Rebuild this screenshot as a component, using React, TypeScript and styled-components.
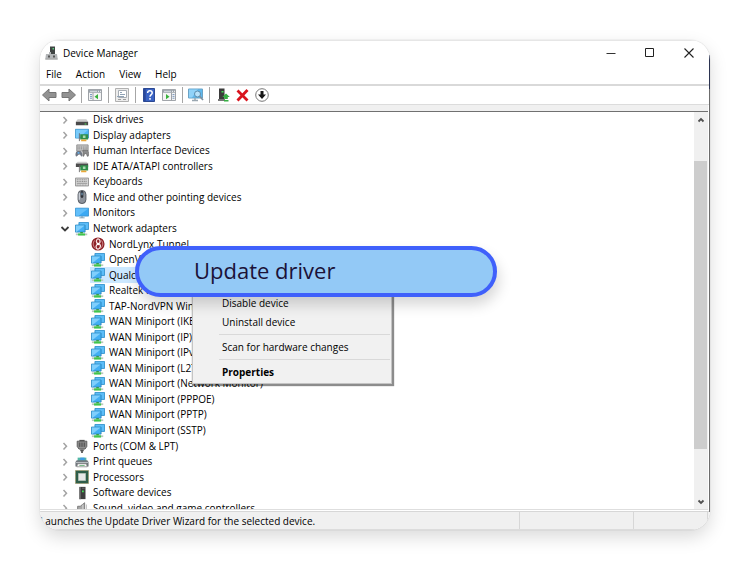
import React from "react";
import styled, { createGlobalStyle } from "styled-components";

const GlobalStyle = createGlobalStyle`
  * { box-sizing: border-box; }
  body { margin: 0; background: #fff; }
  body, button { font-family: "Open Sans", "Noto Sans", sans-serif; font-size: 10px; color: #000; }
  button { border: 0; padding: 0; background: transparent; }
  svg { display: block; flex: none; }
`;

const Page = styled.main`
  padding: 40px;
`;

const Window = styled.section`
  position: relative;
  display: flex;
  flex-direction: column;
  overflow: hidden;
  border-radius: 20px;
  background: #fff;
  &::after {
    content: "";
    position: absolute;
    top: 15px;
    bottom: 18px;
    right: 0;
    width: 1px;
    background: linear-gradient(#2b3350 34px, #6c6c6c 34px);
  }
`;

const Shadow = styled.div`
  border-radius: 20px;
  box-shadow: 0 0 1px rgba(0, 0, 0, 0.35), 0 7px 18px rgba(0, 0, 0, 0.15);
`;

const TitleBar = styled.header`
  display: flex;
  align-items: center;
  height: 24px;
  padding: 0 2px 0 5px;
  border-top: 1px solid #e6e6e6;
`;

const Title = styled.h1`
  flex: 1;
  margin: 0 0 0 5px;
  font-size: 10px;
  font-weight: 400;
`;

const CaptionButton = styled.button`
  display: grid;
  place-items: center;
  width: 39px;
  height: 20px;
`;

const MenuBar = styled.nav`
  display: flex;
  gap: 14px;
  height: 20px;
  padding-left: 6px;
  align-items: center;
`;

const ToolBar = styled.div`
  display: flex;
  align-items: center;
  height: 21px;
  border-top: 2px solid #d9d9d9;
  border-bottom: 1px solid #dcdcdc;
`;

const ToolButton = styled.button<{ $narrow?: boolean }>`
  display: grid;
  place-items: center;
  width: ${(p) => (p.$narrow ? 19 : 20)}px;
  height: 18px;
`;

const ToolDivider = styled.span`
  width: 1px;
  height: 16px;
  margin: 0 3px;
  background: #a6a6a6;
`;

const Content = styled.div`
  position: relative;
  display: flex;
  margin-right: 2px;
  height: 405px;
  border-top: 6px solid #f0f0f0;
  border-bottom: 1px solid #dedede;
`;

const TreePane = styled.div`
  flex: 1;
  overflow: hidden;
  border-top: 1px solid #707070;
`;

const Tree = styled.ul`
  display: grid;
  grid-auto-rows: 1fr;
  height: 404px;
  margin: 0;
  padding: 0;
  list-style: none;
`;

const TreeRow = styled.li<{ $child?: boolean }>`
  display: flex;
  align-items: center;
  min-height: 0;
  padding-left: ${(p) => (p.$child ? 50 : 20)}px;
  line-height: 15px;
  white-space: nowrap;
`;

const Expander = styled.button`
  display: grid;
  place-items: center;
  width: 10px;
  height: 12px;
  margin-right: 4px;
`;

const RowLabel = styled.span<{ $selected?: boolean }>`
  display: flex;
  align-items: center;
  gap: 4px;
  height: 100%;
  padding: 0 4px 0 1px;
  background: ${(p) => (p.$selected ? "#cce8ff" : "transparent")};
`;

const ScrollBar = styled.div`
  display: flex;
  flex-direction: column;
  width: 14px;
  padding-right: 1px;
  background: #f0f0f0;
  border-top: 1px solid #707070;
`;

const ScrollButton = styled.button`
  display: grid;
  place-items: center;
  height: 15px;
`;

const ScrollTrack = styled.div`
  flex: 1;
  padding: 34px 0 45px;
`;

const ScrollThumb = styled.div`
  height: 100%;
  background: #cdcdcd;
`;

const ContextMenu = styled.div`
  position: absolute;
  top: 162px;
  left: 152px;
  width: 200px;
  display: flex;
  flex-direction: column;
  padding: 19px 2px 2px;
  background: #f1f1f1;
  border: 1px solid #c4c4c4;
  box-shadow: 1px 1px 1px 1px rgba(0, 0, 0, 0.45);
`;

const MenuItem = styled.button<{ $strong?: boolean }>`
  height: 19px;
  padding-left: 27px;
  text-align: left;
  font-weight: ${(p) => (p.$strong ? 700 : 400)};
`;

const MenuDivider = styled.hr`
  width: 171px;
  height: 1px;
  margin: 3px 0 2px 24px;
  border: 0;
  background: #d9d9d9;
`;

const Highlight = styled.button`
  position: absolute;
  top: 135px;
  left: 95px;
  width: 362px;
  height: 51px;
  padding: 0 0 4px 55px;
  text-align: left;
  font-size: 22px;
  color: #1b1238;
  background: #93c9f6;
  border: 4px solid #3f60fb;
  border-radius: 26px;
  box-shadow: 2px 8px 14px rgba(0, 0, 0, 0.16);
`;

const StatusBar = styled.footer`
  display: flex;
  height: 19px;
  margin-top: 1px;
  padding-right: 2px;
  background: #f0f0f0;
  border-top: 1px solid #d7d7d7;
  border-bottom: 1px solid #dcdcdc;
`;

const StatusCell = styled.span<{ $width?: number }>`
  flex: ${(p) => (p.$width ? `0 0 ${p.$width}px` : "1")};
  line-height: 19px;
  white-space: nowrap;
  border-right: 1px solid #d7d7d7;
`;

type IconName =
  | "disk" | "display" | "hid" | "ide" | "keyboard" | "mouse" | "monitor" | "network"
  | "nord" | "port" | "printer" | "cpu" | "software" | "sound";

const drawings: Record<IconName, React.ReactNode> = {
  disk: (
    <>
      <path d="M3 7h10l2 3H1z" fill="#c9c9c9" />
      <path d="M1 10h14v4H1z" fill="#4a4a4a" />
      <path d="M11 12h2v1h-2z" fill="#4fe05a" />
    </>
  ),
  display: (
    <>
      <path d="M.5 1.500h15v10H.5z" fill="#4db5f5" stroke="#3f93c8" />
      <path d="M1 2h14L5 11H1z" fill="#79cbfb" />
      <path d="M6 7h9v6H6z" fill="#2f8f4a" />
      <path d="M9 8.500h3v3H9z" fill="#a9d8b0" />
      <path d="M7 13h6v2H7z" fill="#e9a83a" />
      <path d="M5 6v9" stroke="#666" />
    </>
  ),
  hid: (
    <>
      <path d="M2 1h13v7H2z" fill="#c3c3c3" stroke="#8d8d8d" />
      <path d="M3 3.500h11M3 5.500h11" stroke="#777" strokeDasharray="1 1" />
      <path d="M1 14c-1-2 0-6 2-6h3c2 0 3 5 2 6-2 1-1-2-3-2s-2 3-4 2z" fill="#707783" />
      <path d="M9 7h5c2 1 2 6 1 7h-1l-1-3h-2l-1 3H9z" fill="#8b8b8b" stroke="#585858" strokeWidth=".6" />
      <path d="M3 9h2v2H3z" fill="#5faae6" />
    </>
  ),
  ide: (
    <>
      <path d="M3 3h10l2 2H1z" fill="#cfcfcf" />
      <path d="M1 5h14v4H1z" fill="#4c4c4c" />
      <path d="M6 7h9v6H6z" fill="#2f8f4a" />
      <path d="M9 8.500h3v3H9z" fill="#a9d8b0" />
      <path d="M7 13h6v2H7z" fill="#e9a83a" />
      <path d="M5 7v8" stroke="#666" />
    </>
  ),
  keyboard: (
    <>
      <path d="M.5 3.500h15v9H.5z" fill="#d8d8d8" stroke="#8c8c8c" />
      <path d="M2 5.500h12M2 7.500h12" stroke="#808080" strokeDasharray="1.300 .7" />
      <path d="M2 9.500h12" stroke="#909090" />
      <path d="M2 11.500h12" stroke="#9a9a9a" strokeDasharray="2 1" />
    </>
  ),
  mouse: (
    <>
      <rect x="3.500" y=".5" width="9" height="15" rx="4.500" fill="#8d929a" stroke="#4d5259" />
      <path d="M5 3v8" stroke="#c9ced6" strokeWidth="1.500" />
      <rect x="6.500" y="1" width="3" height="8" rx="1.500" fill="#2e3238" />
      <path d="M8 3v3" stroke="#8fc3ee" />
    </>
  ),
  monitor: (
    <>
      <path d="M.5 2.500h15v9H.5z" fill="#3ba9f3" stroke="#3a93cf" />
      <path d="M1 3h14L4 11H1z" fill="#62bffa" />
      <path d="M5 13.500h6" stroke="#7296ad" />
      <path d="M8 12v1" stroke="#7296ad" strokeWidth="2" />
    </>
  ),
  network: (
    <>
      <path d="M4.500 .5h11v8h-11z" fill="#5cbdf8" stroke="#2f8fca" />
      <path d="M.5 3.500h11v8H.5z" fill="#42aff4" stroke="#2a86be" />
      <path d="M1 4h10l-9 7H1z" fill="#7fcffd" />
      <path d="M6 11.500h3v2H6z" fill="#2f9d3f" />
      <path d="M1 14h13" stroke="#b9c8bd" strokeWidth="2" />
      <path d="M3.500 13h8v2.500h-8z" fill="#3fc64b" />
    </>
  ),
  nord: (
    <>
      <circle cx="8" cy="8" r="7.500" fill="#8e2227" />
      <path d="M8 2c3 1 3 4 1 6 3 1 2 5-1 6-3-1-3-5 0-6-3-2-2-5 0-6z" fill="none" stroke="#f4dede" strokeWidth="1.500" />
      <path d="M4 4c-2 3-2 6 1 9M12 4c2 3 2 6-1 9" fill="none" stroke="#d9a2a4" />
      <circle cx="8" cy="8" r="1.500" fill="#fff" />
    </>
  ),
  port: (
    <>
      <path d="M5 1h6v2H5z" fill="#555" />
      <path d="M2.500 2.500h11v6l-2 3h-7l-2-3z" fill="#8f8f8f" stroke="#555" />
      <path d="M5 4v5M7 4v5M9 4v5M11 4v5" stroke="#4c4c4c" />
      <path d="M6 12h4v2H9v2H7v-2H6z" fill="#555" />
    </>
  ),
  printer: (
    <>
      <path d="M3 3h10v4H3z" fill="#52b7a7" />
      <path d="M6 3h5v3H6z" fill="#3e9be5" />
      <path d="M2 6h12l1.500 2v5H.5V8z" fill="#70767c" />
      <path d="M1 8.500h14" stroke="#c7cbd0" />
      <path d="M3 10h10l1 3.500H2z" fill="#f7f7f7" stroke="#777" strokeWidth=".7" />
      <path d="M5 12h6" stroke="#69b279" />
    </>
  ),
  cpu: (
    <>
      <path d="M.5 .5h15v15H.5z" fill="#2f5e4a" stroke="#b49a5f" strokeDasharray="1 1" />
      <path d="M4 4h8v8H4z" fill="#e8e8e8" stroke="#b4c0b7" />
    </>
  ),
  software: (
    <>
      <path d="M5 1h7v14H5z" fill="#3d3d3d" />
      <path d="M5 1h1.500v14H5z" fill="#777" />
      <path d="M8 5h2v2H8z" fill="#44df58" />
      <path d="M8 2.500h3" stroke="#777" />
    </>
  ),
  sound: (
    <>
      <path d="M3 6h3l5-4v13l-5-4H3z" fill="#a7a7a7" stroke="#757575" />
      <path d="M9 4v9" stroke="#dcdcdc" />
      <path d="M13 4v9" stroke="#b5b5b5" />
    </>
  ),
};

const Icon = ({ name }: { name: IconName }) => (
  <svg width="14" height="14" viewBox="0 0 16 16" aria-hidden="true">
    {drawings[name]}
  </svg>
);

const Chevron = ({ open }: { open?: boolean }) => (
  <svg width="10" height="10" viewBox="0 0 10 10" fill="none" strokeWidth={open ? 1.8 : 1.5} aria-hidden="true">
    <path d={open ? "M1.500 3L5 6.500 8.500 3" : "M3.500 2L6.500 5.200 3.500 8.500"} stroke={open ? "#3c3c3c" : "#a3a3a3"} />
  </svg>
);

const Arrow = ({ up }: { up?: boolean }) => (
  <svg width="8" height="8" viewBox="0 0 8 8" fill="none" stroke="#505050" strokeWidth="1.800" aria-hidden="true">
    <path d={up ? "M1.500 5.500L4 3l2.500 2.500" : "M1.500 2.500L4 5l2.500-2.500"} />
  </svg>
);

const NavArrow = ({ forward }: { forward?: boolean }) => (
  <svg width="15" height="14" viewBox="0 0 15 14" aria-hidden="true">
    <path
      d={forward ? "M14.500 7L8 1V4.500H1V9.500H8V13z" : "M.5 7L7 1V4.500H14V9.500H7V13z"}
      fill="#929292"
      stroke="#757575"
      strokeLinejoin="round"
    />
  </svg>
);

const PaneIcon = ({ right }: { right?: boolean }) => (
  <svg width="14" height="12" viewBox="0 0 14 13" preserveAspectRatio="none" aria-hidden="true">
    <path d="M.5 .5h13v12H.5z" fill="#f4f4f4" stroke="#9a9ea3" />
    <path d="M1 1h12v3H1z" fill="#9ba3ab" />
    <path d="M2 2.500h7" stroke="#dfe4e8" />
    <path d="M10 2.500h3" stroke="#fff" strokeDasharray="1 1" />
    <path d={right ? "M9.500 4v8" : "M5 4v8"} stroke="#9a9ea3" />
    <path d={right ? "M10.500 6h2M10.500 8h2M10.500 10h2" : "M2 6h2M2 8h2M2 10h2"} stroke="#7796bd" />
    <path d={right ? "M4 5.500L7.500 8.300 4 11z" : "M10 5.500L6.500 8.300 10 11z"} fill="#37b13b" />
  </svg>
);

const PropertiesIcon = () => (
  <svg width="14" height="14" viewBox="0 0 14 14" aria-hidden="true">
    <path d="M.5 .5h13v13H.5z" fill="#ececec" stroke="#b0b0b0" />
    <path d="M3.500 2.500h8v7h-8z" fill="#fff" stroke="#a7adb4" />
    <path d="M5 4.500h2M5 6.500h5M2 8.500h7" stroke="#8fa2b5" />
    <path d="M3 11.500h3M8 11.500h3" stroke="#9e9e9e" />
  </svg>
);

const HelpIcon = () => (
  <svg width="12" height="14" viewBox="0 0 13 14" preserveAspectRatio="none" aria-hidden="true">
    <path d="M.5 .5h12v13H.5z" fill="#3a63c4" stroke="#26448f" />
    <path d="M1 1h2v12H1z" fill="#2a489b" />
    <path d="M5 5c0-3 5-3 5 0 0 1.500-2.400 1.700-2.400 3.700M7.600 10v1.700" fill="none" stroke="#fff" strokeWidth="1.600" />
  </svg>
);

const ScanIcon = () => (
  <svg width="16" height="14" viewBox="0 0 16 14" aria-hidden="true">
    <path d="M.5 1h14v9H.5z" fill="#5fb9ee" stroke="#6ba3c6" />
    <path d="M1 1.500h9l-6 8H1z" fill="#90d2f8" />
    <path d="M4 12.500h6M7 10v2" stroke="#9aa7b1" strokeWidth="1.500" />
    <circle cx="9.500" cy="6" r="3" fill="#b8e2fa" stroke="#5a8bac" />
    <path d="M11.500 8L15 12" stroke="#7c909f" strokeWidth="1.600" />
  </svg>
);

const UpdateIcon = () => (
  <svg width="13" height="14" viewBox="0 0 13 14" aria-hidden="true">
    <path d="M2 .5h5.500v11H2z" fill="#3b3b3b" />
    <path d="M1 11h7v2H1z" fill="#777" />
    <path d="M4.500 3h2v1.500h-2z" fill="#46dc58" />
    <path d="M9 5.500L12.800 9H10.800v2H7.300V9H5.300zM7 12h4.500v1.500H7z" fill="#36ae43" />
  </svg>
);

const RemoveIcon = () => (
  <svg width="13" height="13" viewBox="0 0 13 13" aria-hidden="true">
    <path d="M1.500 1.500L11.500 11.500M11.500 1L1.500 11.500" stroke="#d9141e" strokeWidth="2.800" />
  </svg>
);

const DownIcon = () => (
  <svg width="14" height="14" viewBox="0 0 14 14" aria-hidden="true">
    <circle cx="7" cy="7" r="6.300" fill="#fff" stroke="#777" />
    <path d="M5.500 3h3v3.500h2.500L7 11 3 6.500h2.500z" fill="#161616" />
  </svg>
);

const AppIcon = () => (
  <svg width="13" height="14" viewBox="0 0 13 14" aria-hidden="true">
    <path d="M5 .5h5v8H5z" fill="#3f4443" />
    <path d="M7.500 2h1.500v1.500H7.500z" fill="#58cd7a" />
    <path d="M1 8h3V6h2v2h6l.8 5.500H.2z" fill="#b3b6b8" />
    <path d="M3 9.500h2v2H3zM8 9.500h2v2H8z" fill="#555" />
    <path d="M.5 13h12" stroke="#a5a5a5" />
  </svg>
);

type Row = { label: string; icon: IconName; child?: boolean; open?: boolean; selected?: boolean };

const adapter = (label: string, selected = false): Row => ({ label, icon: "network", child: true, selected });

const rows: Row[] = [
  { label: "Disk drives", icon: "disk" },
  { label: "Display adapters", icon: "display" },
  { label: "Human Interface Devices", icon: "hid" },
  { label: "IDE ATA/ATAPI controllers", icon: "ide" },
  { label: "Keyboards", icon: "keyboard" },
  { label: "Mice and other pointing devices", icon: "mouse" },
  { label: "Monitors", icon: "monitor" },
  { label: "Network adapters", icon: "network", open: true },
  { label: "NordLynx Tunnel", icon: "nord", child: true },
  adapter("OpenVPN"),
  adapter("Qualcomm", true),
  adapter("Realtek PCIe"),
  adapter("TAP-NordVPN Wind"),
  adapter("WAN Miniport (IKEv2)"),
  adapter("WAN Miniport (IP)"),
  adapter("WAN Miniport (IPv6)"),
  adapter("WAN Miniport (L2TP)"),
  adapter("WAN Miniport (Network Monitor)"),
  adapter("WAN Miniport (PPPOE)"),
  adapter("WAN Miniport (PPTP)"),
  adapter("WAN Miniport (SSTP)"),
  { label: "Ports (COM & LPT)", icon: "port" },
  { label: "Print queues", icon: "printer" },
  { label: "Processors", icon: "cpu" },
  { label: "Software devices", icon: "software" },
  { label: "Sound, video and game controllers", icon: "sound" },
];

export default function App() {
  return (
    <Page>
      <GlobalStyle />
      <Shadow>
        <Window>
          <TitleBar>
            <AppIcon />
            <Title>Device Manager</Title>
            <CaptionButton aria-label="Minimize">
              <svg width="10" height="10" viewBox="0 0 10 10"><path d="M.5 5.500h9" stroke="#333" /></svg>
            </CaptionButton>
            <CaptionButton aria-label="Maximize">
              <svg width="10" height="10" viewBox="0 0 10 10"><path d="M.5 .5h8v8h-8z" fill="none" stroke="#222" /></svg>
            </CaptionButton>
            <CaptionButton aria-label="Close">
              <svg width="10" height="10" viewBox="0 0 10 10"><path d="M.5 .5l9 9M9.500 .5l-9 9" stroke="#222" strokeWidth="1.100" /></svg>
            </CaptionButton>
          </TitleBar>
          <MenuBar>
            <button>File</button>
            <button>Action</button>
            <button>View</button>
            <button>Help</button>
          </MenuBar>
          <ToolBar>
            <ToolButton $narrow aria-label="Back"><NavArrow /></ToolButton>
            <ToolButton $narrow aria-label="Forward"><NavArrow forward /></ToolButton>
            <ToolDivider />
            <ToolButton aria-label="Show console tree"><PaneIcon /></ToolButton>
            <ToolDivider />
            <ToolButton aria-label="Properties"><PropertiesIcon /></ToolButton>
            <ToolDivider />
            <ToolButton aria-label="Help"><HelpIcon /></ToolButton>
            <ToolButton aria-label="Show action pane"><PaneIcon right /></ToolButton>
            <ToolDivider />
            <ToolButton aria-label="Scan for hardware changes"><ScanIcon /></ToolButton>
            <ToolDivider />
            <ToolButton aria-label="Update driver"><UpdateIcon /></ToolButton>
            <ToolButton $narrow aria-label="Uninstall device"><RemoveIcon /></ToolButton>
            <ToolButton aria-label="Disable device"><DownIcon /></ToolButton>
          </ToolBar>
          <Content>
            <TreePane>
              <Tree>
                {rows.map((row) => (
                  <TreeRow key={row.label} $child={row.child}>
                    {!row.child && (
                      <Expander aria-label={`Toggle ${row.label}`} aria-expanded={!!row.open}>
                        <Chevron open={row.open} />
                      </Expander>
                    )}
                    <RowLabel $selected={row.selected}>
                      <Icon name={row.icon} />
                      {row.label}
                    </RowLabel>
                  </TreeRow>
                ))}
              </Tree>
            </TreePane>
            <ScrollBar>
              <ScrollButton aria-label="Scroll up"><Arrow up /></ScrollButton>
              <ScrollTrack><ScrollThumb /></ScrollTrack>
              <ScrollButton aria-label="Scroll down"><Arrow /></ScrollButton>
            </ScrollBar>
            <ContextMenu>
              <MenuItem>Disable device</MenuItem>
              <MenuItem>Uninstall device</MenuItem>
              <MenuDivider />
              <MenuItem>Scan for hardware changes</MenuItem>
              <MenuDivider />
              <MenuItem $strong>Properties</MenuItem>
            </ContextMenu>
            <Highlight>Update driver</Highlight>
          </Content>
          <StatusBar>
            <StatusCell>Launches the Update Driver Wizard for the selected device.</StatusCell>
            <StatusCell $width={114} />
            <StatusCell $width={74} />
          </StatusBar>
        </Window>
      </Shadow>
    </Page>
  );
}
